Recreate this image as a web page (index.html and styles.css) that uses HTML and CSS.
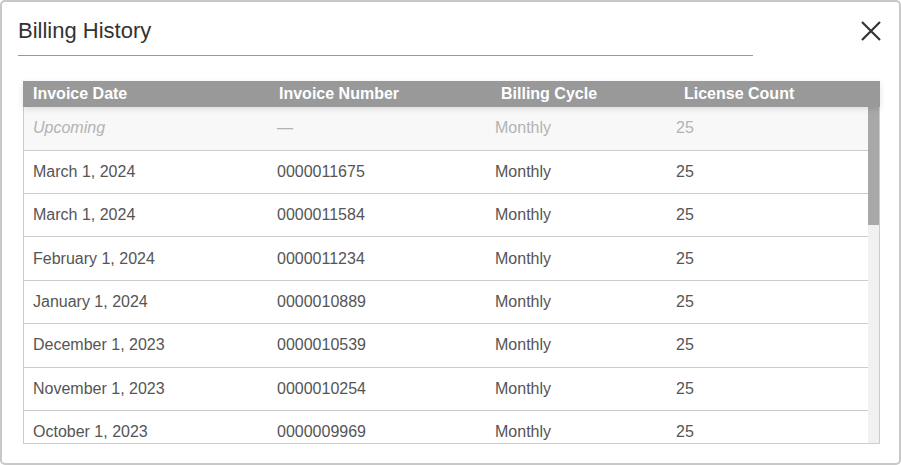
FILE: index.html
```html
<!DOCTYPE html>
<html lang="en">
<head>
    <meta charset="UTF-8">
    <title>Billing History</title>
    <link rel="stylesheet" href="styles.css">
</head>
<body>

<div class="modal">
    <div class="modal-header">
        <h2 class="modal-title">Billing History</h2>
        <div class="close-btn">
            <svg width="20" height="20" viewBox="0 0 20 20">
                <path d="M1 1 L19 19 M19 1 L1 19" stroke="#333" stroke-width="2.2" fill="none"/>
            </svg>
        </div>
    </div>

    <div class="billing-table">
        <div class="table-head">
            <div>Invoice Date</div>
            <div>Invoice Number</div>
            <div>Billing Cycle</div>
            <div>License Count</div>
        </div>
        <div class="table-body">
            <div class="rows" id="tableRows">
                <div class="row upcoming">
                    <div>Upcoming</div>
                    <div>&mdash;</div>
                    <div>Monthly</div>
                    <div>25</div>
                </div>
            </div>
            <div class="scrollbar">
                <div class="scroll-thumb"></div>
            </div>
        </div>
    </div>
</div>

<script>
    const invoices = [
        ['March 1, 2024', '0000011675'],
        ['March 1, 2024', '0000011584'],
        ['February 1, 2024', '0000011234'],
        ['January 1, 2024', '0000010889'],
        ['December 1, 2023', '0000010539'],
        ['November 1, 2023', '0000010254'],
        ['October 1, 2023', '0000009969']
    ];

    const rows = document.getElementById('tableRows');
    invoices.forEach(inv => {
        const row = document.createElement('div');
        row.className = 'row';
        [inv[0], inv[1], 'Monthly', '25'].forEach(text => {
            const cell = document.createElement('div');
            cell.innerText = text;
            row.appendChild(cell);
        });
        rows.appendChild(row);
    });
</script>

</body>
</html>
```

FILE: styles.css
```css
body {
    margin: 0;
    padding: 0;
    background-color: #ffffff;
    font-family: 'Liberation Sans', Arial, sans-serif;
    color: #333;
    height: 100vh;
    overflow: hidden;
}
.modal {
    box-sizing: border-box;
    width: 901px;
    height: 465px;
    background-color: #fff;
    border: 2px solid #c8c8c8;
    border-radius: 5px;
}
.modal-header {
    display: flex;
    align-items: flex-start;
    padding: 15px 18px 0 16px;
}
.modal-title {
    margin: 0;
    width: 735px;
    font-size: 22px;
    font-weight: normal;
    line-height: 28px;
    padding-bottom: 10px;
    color: #333;
    border-bottom: 1px solid #999;
}
.close-btn {
    margin-left: auto;
    margin-top: 4px;
    cursor: pointer;
}
.billing-table {
    margin: 25px 19px 0 21px;
}
.table-head {
    display: grid;
    grid-template-columns: 246px 222px 183px 1fr;
    height: 26px;
    align-items: center;
    background-color: #999;
    color: #fff;
    font-weight: bold;
    font-size: 16px;
    position: relative;
    z-index: 1;
    box-shadow: 0 2px 6px rgba(0, 0, 0, 0.12);
}
.table-head div {
    padding-left: 10px;
}
.table-body {
    display: flex;
    height: 336px;
    border: 1px solid #ccc;
    border-top: none;
}
.rows {
    flex: 1;
    overflow: hidden;
}
.scrollbar {
    width: 11px;
    background-color: #f1f1f1;
}
.scroll-thumb {
    height: 118px;
    background-color: #a8a8a8;
}
.row {
    display: grid;
    grid-template-columns: 244px 218px 181px 1fr;
    height: 42.4px;
    align-items: center;
    border-bottom: 1px solid #ccc;
    font-size: 16px;
    color: #555;
    background-color: #fff;
}
.row div {
    padding-left: 9px;
}
.row.upcoming {
    height: 42.6px;
    background-color: #f8f8f8;
    color: #b3b3b3;
}
.row.upcoming div:first-child {
    font-style: italic;
}
```
